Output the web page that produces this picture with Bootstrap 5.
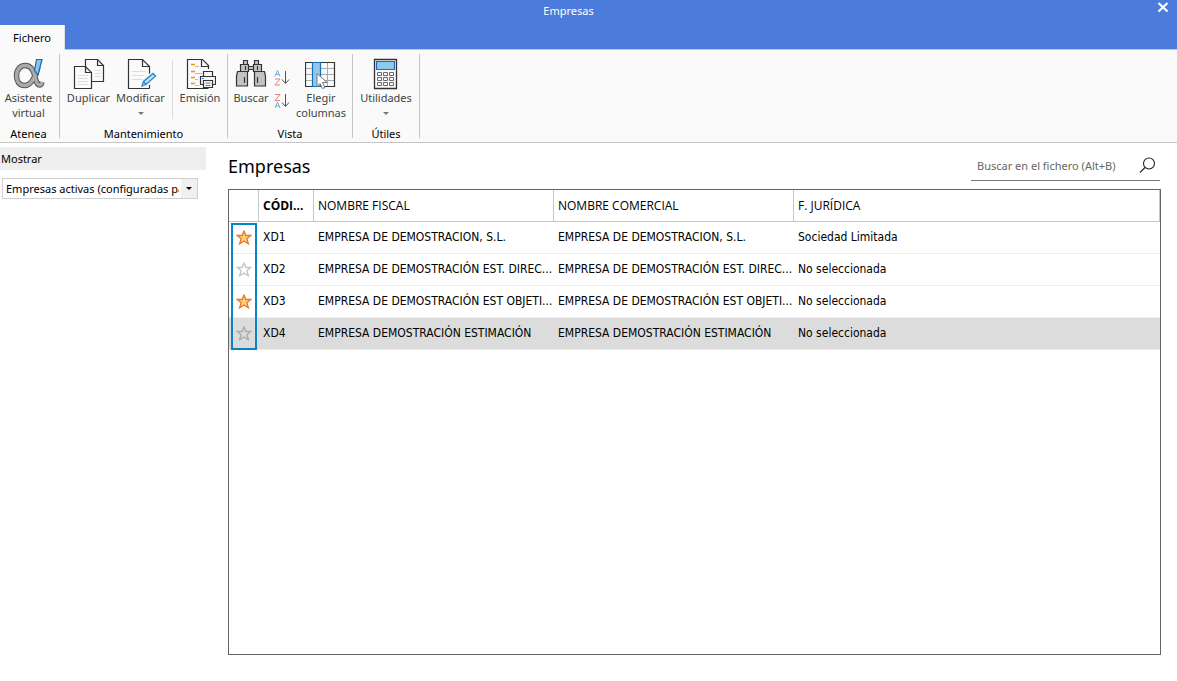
<!DOCTYPE html>
<html lang="es">
<head>
<meta charset="utf-8">
<meta name="viewport" content="width=device-width, initial-scale=1">
<title>Empresas</title>
<link href="https://cdn.jsdelivr.net/npm/bootstrap@5.3.0/dist/css/bootstrap.min.css" rel="stylesheet">
<style>
  body { font-family: "Noto Sans", "Open Sans", sans-serif; font-size: 11px; line-height: 15px; color: #000; background: #fff; }
  button { color: inherit; }
  .titlebar { background: #4c7cdb; height: 50px; color: #fff; border-bottom: 1px solid #c6c6c6; }
  .win-title { height: 22px; line-height: 22px; padding-right: 40px; }
  .win-close { top: 0; right: 6px; width: 16px; height: 16px; }
  .file-tab { width: 65px; height: 25px; margin-top: 3px; color: #000; background: #fafafa; border-right: 1px solid #c6c6c6; }
  .ribbon { background: #fafafa; height: 93px; border-bottom: 1px solid #c6c6c6; padding: 4px 0; }
  .r-group { border-right: 1px solid #c6c6c6; }
  .r-label { margin-top: auto; line-height: 8px; }
  .r-btn { color: #444; padding-top: 4px; line-height: 15px; }
  .r-btn svg { display: block; }
  .caret { width: 0; height: 0; border: 3px solid transparent; border-top-color: #777; border-bottom: 0; margin-top: 7px; }
  .r-sep { width: 1px; height: 59px; margin: 6px 0 0 6px; background: #dcdcdc; }
  .g-atenea { width: 60px; padding-right: 2px; }
  .g-mant { width: 168px; }
  .g-mant > div:first-child { padding-left: 2px; }
  .g-vista { width: 125px; }
  .g-utiles { width: 67px; }
  .w-a { width: 53px; } .w-b { width: 51px; }
  .w-find { width: 38px; } .w-sort { width: 16px; }
  .side { width: 206px; padding-top: 4px; }
  .side-head { background: #eee; height: 23px; line-height: 23px; padding-left: 1px; }
  .filter { width: 196px; height: 21px; margin: 8px 0 0 2px; border: 1px solid #d0d0d0; }
  .filter select { appearance: none; border: 0; padding: 0 0 0 3px; width: 176px; margin-right: 2px; background: #fff; color: #000; line-height: 19px; height: 19px; text-overflow: clip; }
  .filter .drop { width: 16px; background: #f0f0f0; pointer-events: none; }
  .filter .drop i { width: 0; height: 0; border: 3px solid transparent; border-top-color: #000; border-bottom: 0; }
  .content-pane { margin: 0 16px 26px 22px; }
  .pane-head { height: 46px; }
  .pane-head h1 { font-size: 18px; line-height: 24px; margin: 11px 0 0; }
  .search-box { width: 189px; height: 29px; margin: 9px 1px 0 0; border-bottom: 1px solid #777; padding: 0 4px 2px 6px; }
  .search-box input { border: 0; padding: 0; outline: 0; background: none; min-width: 0; color: #444; }
  .search-box input::placeholder { color: #666; opacity: 1; }
  .grid-frame { border: 1px solid #646464; }
  .data-grid { table-layout: fixed; width: 100%; font-size: 12px; border-collapse: separate; border-spacing: 0; font-family: "Open Sans", "Noto Sans", sans-serif; }
  .data-grid th { height: 32px; font-weight: 400; border-right: 1px solid #c6c6c6; border-bottom: 1px solid #c6c6c6; }
  .data-grid td { height: 32px; border-bottom: 1px solid #ededed; font-family: "DejaVu Sans Condensed", "Noto Sans", sans-serif; }
  .data-grid th, .data-grid td { padding: 0 0 0 4px; white-space: nowrap; overflow: hidden; }
  .data-grid tr.picked td { background: #dcdcdc; }
  .data-grid button { display: block; margin-left: 3px; }
  .fav-outline { left: 2px; top: 33px; width: 26px; height: 127px; border: 2px solid #0a84c8; pointer-events: none; }
  .c-fav { width: 30px; } .c-code { width: 55px; } .c-name { width: 240px; }
</style>
</head>
<body class="d-flex flex-column min-vh-100">
<svg width="0" height="0" class="position-absolute" aria-hidden="true">
  <symbol id="star" viewBox="0 0 16 16"><path d="M8 1 9.800 5.500h5l-3.900 3.200 1.500 5L8 11 3.600 13.700l1.500-5L1.200 5.500h5z" stroke-width="1.300"/></symbol>
</svg>

<header class="titlebar position-relative">
  <div class="win-title text-center">Empresas</div>
  <button class="win-close btn p-0 border-0 position-absolute d-flex" aria-label="Cerrar">
    <svg width="16" height="16" viewBox="0 0 16 16"><path d="M3.500 3 12.500 11.500M12.500 3 3.500 11.500" stroke="#fff" stroke-width="2.200"/></svg>
  </button>
  <button class="file-tab border-0 border-end p-0">Fichero</button>
</header>

<nav class="ribbon d-flex" aria-label="Cinta de opciones">
  <section class="r-group g-atenea d-flex flex-column align-items-center">
    <button class="r-btn border-0 bg-transparent px-0 pb-0 d-flex flex-column align-items-center">
      <svg width="32" height="32" viewBox="0 0 32 32"><path d="M25 9C22 20 18 27.500 11.500 27.500 6 27.500 3.500 23 3.500 17.500S7 7.500 12 7.500c7 0 9 6.500 10.500 13 .8 4 2 6.500 4 6.500 1.500 0 2-1 2.500-3" fill="none" stroke="#555" stroke-width="5.500"/><path d="M25 9C22 20 18 27.500 11.500 27.500 6 27.500 3.500 23 3.500 17.500S7 7.500 12 7.500c7 0 9 6.500 10.500 13 .8 4 2 6.500 4 6.500 1.500 0 2-1 2.500-3" fill="none" stroke="#aaa" stroke-width="3.500"/><path d="M23.500 1.500h5.500L25 17l-3.500-4.500z" fill="#8ac5ef" stroke="#1768ac" stroke-width="1.200"/></svg>
      <span>Asistente<br>virtual</span>
    </button>
    <div class="r-label">Atenea</div>
  </section>

  <section class="r-group g-mant d-flex flex-column align-items-center">
    <div class="d-flex w-100">
      <button class="r-btn w-a border-0 bg-transparent px-0 pb-0 d-flex flex-column align-items-center">
        <svg width="32" height="32" viewBox="0 0 32 32" fill="#fafafa" stroke="#333" stroke-width="1.200"><path d="M12.500 1.500h12l6 6v16h-18zM24.500 1.500v6h6"/><path d="M22 12.500h6M22 15.500h6M22 18.500h6" stroke="#ddd"/><path d="M1.500 8.500h11l6 6v16h-17zM12.500 8.500v6h6"/><path d="M5 17.500h10M5 20.500h10M5 23.500h10M5 26.500h10" stroke="#ddd"/></svg>
        <span>Duplicar</span>
      </button>
      <button class="r-btn w-b border-0 bg-transparent px-0 pb-0 d-flex flex-column align-items-center">
        <svg width="32" height="32" viewBox="0 0 32 32" fill="none"><path d="M24.500 30.500h-21v-29h14l7 7v7M17.500 1.500v7h7M24.500 27v3.500" stroke="#333" stroke-width="1.200"/><path d="M7 13.500h14M7 17.500h12M7 21.500h11" stroke="#ddd"/><path d="M17 28l1.500-4.500L28 15.500l2.500 2.500-9.500 8.500zM18.500 23.500l2.500 3" fill="#bfe0f5" stroke="#2788c8" stroke-width="1.300"/></svg>
        <span>Modificar</span>
        <span class="caret"></span>
      </button>
      <span class="r-sep"></span>
      <button class="r-btn flex-fill border-0 bg-transparent px-0 pb-0 d-flex flex-column align-items-center">
        <svg width="32" height="32" viewBox="0 0 32 32" fill="none"><path d="M24.500 11v-3.500l-6-6H3.500v29h21" stroke="#333" stroke-width="1.200"/><path d="M17.500 1.500v7h7" stroke="#333" stroke-width="1.200"/><path d="M7 6.500h4M7 13.500h4M7 19.500h4M7 25.500h4" stroke="#ee9416" stroke-width="1.500"/><path d="M11 8.500h4M11 15.500h7M11 21.500h3M11 27.500h4" stroke="#bbb"/><path d="M19.500 18.500v-5h9v5M19.500 26.500h-3v-8h15v8h-3" fill="#fafafa" stroke="#333" stroke-width="1.200"/><path d="M19.500 22.500h9v7h-9z" fill="#fafafa" stroke="#333" stroke-width="1.200"/><path d="M21.500 25h5M21.500 27.500h5" stroke="#777"/><path d="M18 20.500h2" stroke="#2788c8"/></svg>
        <span>Emisión</span>
      </button>
    </div>
    <div class="r-label">Mantenimiento</div>
  </section>

  <section class="r-group g-vista d-flex flex-column align-items-center">
    <div class="d-flex w-100">
      <button class="r-btn w-find border-0 bg-transparent px-0 pb-0 d-flex flex-column align-items-center ms-1">
        <svg width="32" height="32" viewBox="0 0 32 32" fill="#c5c2c0" stroke="#333" stroke-width="1.200"><path d="M5.500 6.500h8v7h-8zM18.500 6.500h8v7h-8zM8.500 2.500h4v4h-4zM19.500 2.500h4v4h-4zM13.500 8.500h5v3h-5z"/><path d="M2.500 13.500h10v14.500h-11V18zM19.500 13.500h10l1 4.500v10h-11z"/><path d="M9.500 19v6M22.500 19v6M10.500 8v4M22.500 8v4"/></svg>
        <span>Buscar</span>
      </button>
      <div class="w-sort d-flex flex-column ms-1">
        <button class="border-0 bg-transparent p-0 pt-3" aria-label="Orden ascendente">
          <svg class="d-block" width="16" height="16" viewBox="0 0 16 16" fill="none"><path d="M1 6.500 3.500.5 6 6.500M2 4.500h3" stroke="#6cb0dc"/><path d="M1 9h5l-5 6h5" stroke="#ec7c7c"/><path d="M11.500 1v12M8 9.500l3.500 4 3.500-4" stroke="#555"/></svg>
        </button>
        <button class="border-0 bg-transparent p-0 pt-2" aria-label="Orden descendente">
          <svg class="d-block" width="16" height="16" viewBox="0 0 16 16" fill="none"><path d="M1 .5h5l-5 6h5" stroke="#ec7c7c"/><path d="M1 14l2.500-6L6 14M2 12h3" stroke="#6cb0dc"/><path d="M11.500 0v12M8 8.500l3.500 4 3.500-4" stroke="#555"/></svg>
        </button>
      </div>
      <button class="r-btn flex-fill border-0 bg-transparent px-0 pb-0 d-flex flex-column align-items-center">
        <svg width="32" height="32" viewBox="0 0 32 32" fill="none"><path d="M.5 4.500h29v24h-29z" fill="#fafafa"/><path d="M0 10.500h30M0 16.500h30M0 22.500h30M22.500 4v25" stroke="#aaa"/><path d="M.5 4.500h29v24h-29z" stroke="#333" stroke-width="1.200"/><path d="M7.500 4.500h8v24h-8z" fill="#91c8ee" stroke="#176fb5" stroke-width="1.200"/><path d="M12 15.500v13l3-3 2.500 5 2.500-1-2.500-5h4.500z" fill="#fff" stroke="#777"/></svg>
        <span>Elegir<br>columnas</span>
      </button>
    </div>
    <div class="r-label">Vista</div>
  </section>

  <section class="r-group g-utiles d-flex flex-column align-items-center">
    <button class="r-btn border-0 bg-transparent px-0 pb-0 d-flex flex-column align-items-center">
      <svg width="32" height="32" viewBox="0 0 32 32" fill="none"><path d="M4.500 1.500h22v29h-22z" stroke="#333" stroke-width="1.300"/><path d="M6.500 3.500h18v8h-18z" fill="#91c8ee" stroke="#176fb5" stroke-width="1.200"/><path d="M7.500 14.500h4v3h-4zM13.500 14.500h4v3h-4zM19.500 14.500h4v3h-4zM7.500 19.500h4v3h-4zM13.500 19.500h4v3h-4zM19.500 19.500h4v3h-4zM7.500 24.500h4v3h-4zM13.500 24.500h4v3h-4zM19.500 24.500h4v3h-4z" stroke="#6b6b6b"/></svg>
      <span>Utilidades</span>
      <span class="caret"></span>
    </button>
    <div class="r-label">Útiles</div>
  </section>
</nav>

<div class="d-flex flex-fill">
  <aside class="side flex-shrink-0">
    <label class="side-head d-block" for="show">Mostrar</label>
    <div class="filter d-flex">
      <select id="show"><option>Empresas activas (configuradas para mostrar)</option></select>
      <span class="drop d-flex align-items-center justify-content-center"><i></i></span>
    </div>
  </aside>

  <main class="content-pane flex-fill d-flex flex-column">
    <div class="pane-head d-flex justify-content-between align-items-start">
      <h1 class="fw-normal">Empresas</h1>
      <div class="search-box d-flex align-items-center">
        <input class="flex-fill" type="search" aria-label="Buscar" placeholder="Buscar en el fichero (Alt+B)">
        <svg width="17" height="17" viewBox="0 0 17 17" fill="none" stroke="#222" stroke-width="1.100"><circle cx="10" cy="6.500" r="5.500"/><path d="M6 10.500 1 15.500"/></svg>
      </div>
    </div>
    <div class="grid-frame flex-fill position-relative">
      <table class="data-grid">
        <colgroup><col class="c-fav"><col class="c-code"><col class="c-name"><col class="c-name"><col></colgroup>
        <thead><tr><th></th><th class="fw-bold">CÓDI...</th><th>NOMBRE FISCAL</th><th>NOMBRE COMERCIAL</th><th>F. JURÍDICA</th></tr></thead>
        <tbody>
          <tr><td><button class="border-0 bg-transparent p-0" aria-label="Favorita"><svg class="d-block" width="16" height="16" fill="#ffd27a" stroke="#e8762c"><use href="#star"/></svg></button></td><td>XD1</td><td>EMPRESA DE DEMOSTRACION, S.L.</td><td>EMPRESA DE DEMOSTRACION, S.L.</td><td>Sociedad Limitada</td></tr>
          <tr><td><button class="border-0 bg-transparent p-0" aria-label="Favorita"><svg class="d-block" width="16" height="16" fill="none" stroke="#c4c4c4"><use href="#star"/></svg></button></td><td>XD2</td><td>EMPRESA DE DEMOSTRACIÓN EST. DIREC...</td><td>EMPRESA DE DEMOSTRACIÓN EST. DIREC...</td><td>No seleccionada</td></tr>
          <tr><td><button class="border-0 bg-transparent p-0" aria-label="Favorita"><svg class="d-block" width="16" height="16" fill="#ffd27a" stroke="#e8762c"><use href="#star"/></svg></button></td><td>XD3</td><td>EMPRESA DE DEMOSTRACIÓN EST OBJETI...</td><td>EMPRESA DE DEMOSTRACIÓN EST OBJETI...</td><td>No seleccionada</td></tr>
          <tr class="picked"><td><button class="border-0 bg-transparent p-0" aria-label="Favorita"><svg class="d-block" width="16" height="16" fill="none" stroke="#aaa"><use href="#star"/></svg></button></td><td>XD4</td><td>EMPRESA DEMOSTRACIÓN ESTIMACIÓN</td><td>EMPRESA DEMOSTRACIÓN ESTIMACIÓN</td><td>No seleccionada</td></tr>
        </tbody>
      </table>
      <div class="fav-outline position-absolute"></div>
    </div>
  </main>
</div>
<script src="https://cdn.jsdelivr.net/npm/bootstrap@5.3.0/dist/js/bootstrap.bundle.min.js"></script>
</body>
</html>
